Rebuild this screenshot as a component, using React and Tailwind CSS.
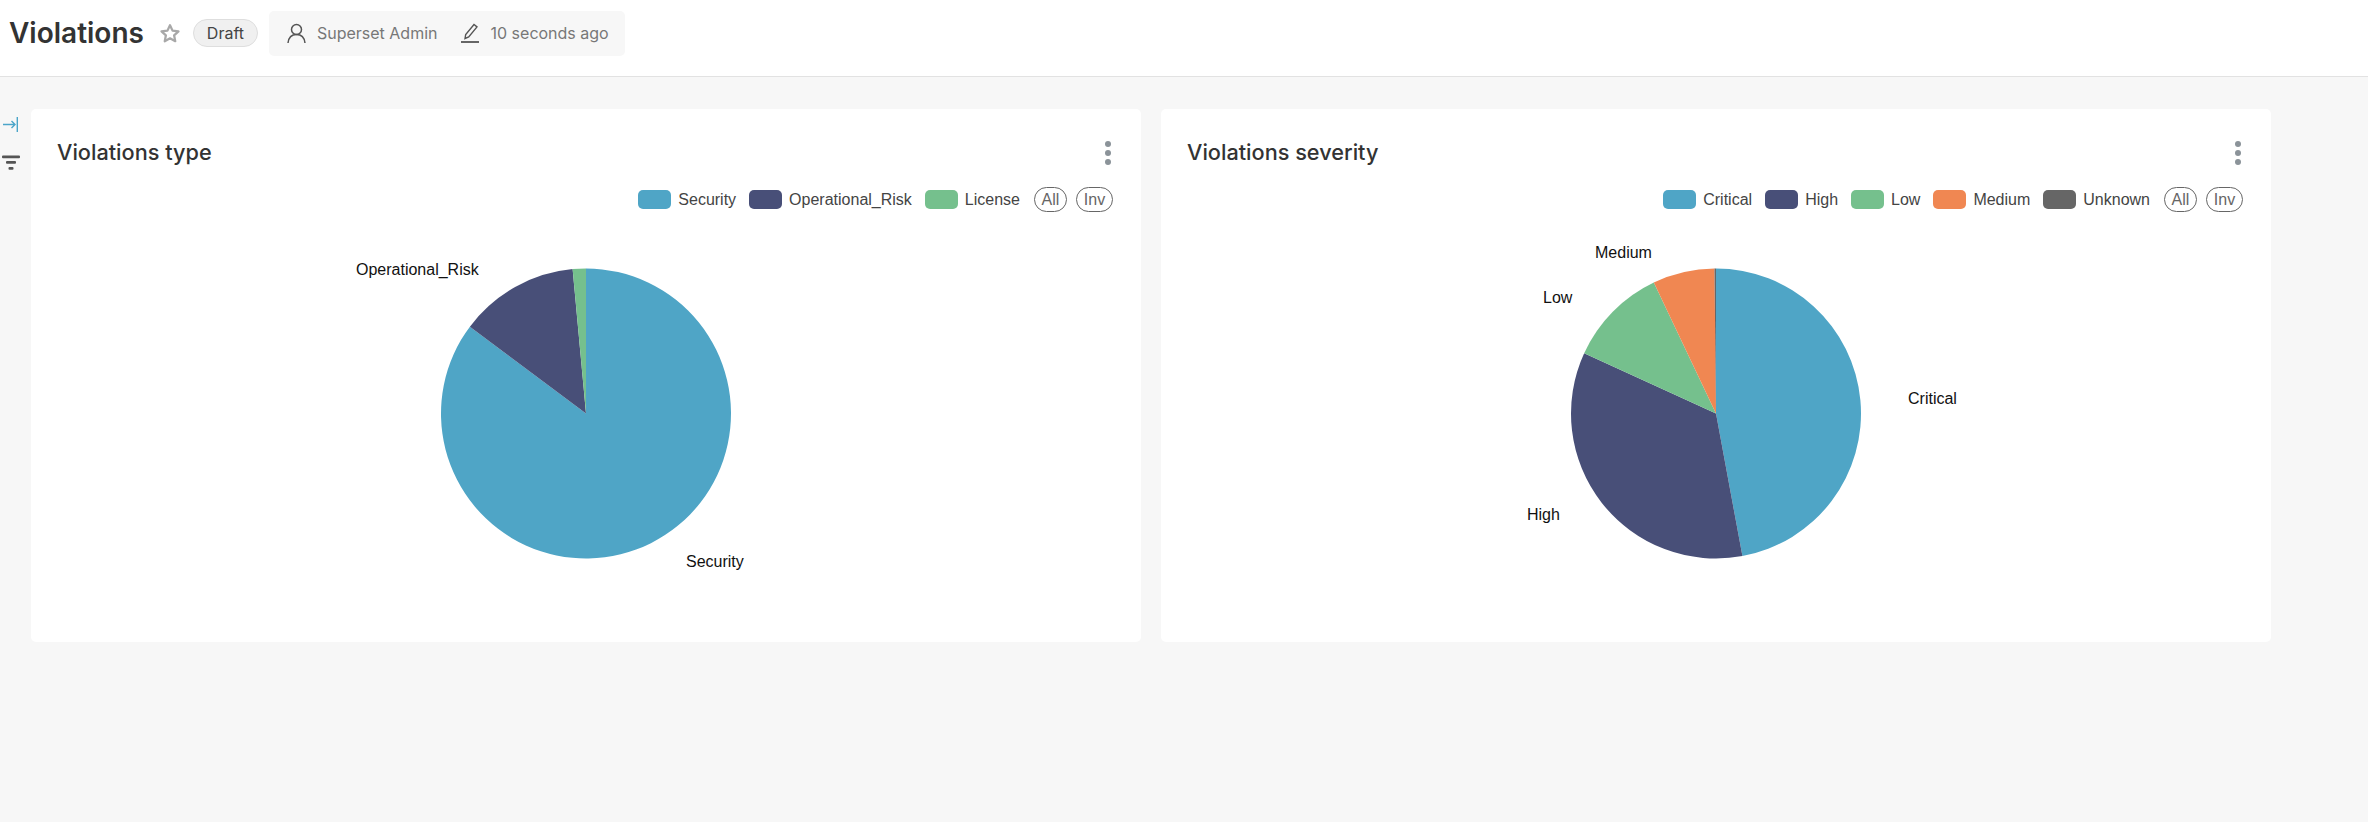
import React from "react";

const C = { blue: "#4FA5C6", navy: "#484F78", green: "#75C08D", orange: "#F08752", gray: "#666666" };

function slice(cx, cy, r, a0, a1) {
  const p = (a) => [cx + r * Math.sin((a * Math.PI) / 180), cy - r * Math.cos((a * Math.PI) / 180)];
  const [x0, y0] = p(a0);
  const [x1, y1] = p(a1);
  return `M${cx} ${cy}L${x0} ${y0}A${r} ${r} 0 ${a1 - a0 > 180 ? 1 : 0} 1 ${x1} ${y1}Z`;
}

function Dots() {
  return (
    <div className="flex flex-col gap-[3px] mr-[30px]">
      <span className="w-[6px] h-[6px] rounded-full bg-[#8b9399]" />
      <span className="w-[6px] h-[6px] rounded-full bg-[#8b9399]" />
      <span className="w-[6px] h-[6px] rounded-full bg-[#8b9399]" />
    </div>
  );
}

function Legend({ items }) {
  return (
    <div className="flex items-center justify-end gap-[13px] mt-[18px] pr-[28px] h-[25px] font-['Liberation_Sans',Arial,sans-serif] text-[16px] text-[#444]">
      {items.map((it) => (
        <div key={it.label} className="flex items-center gap-[7px]">
          <span style={{ background: it.color }} className="w-[33px] h-[19px] rounded-[5px] shrink-0" />
          <span className="whitespace-nowrap">{it.label}</span>
        </div>
      ))}
      <div className="flex items-center gap-[9px] ml-[1px]">
        <span className="w-[33px] h-[25px] rounded-full border border-[#666] flex items-center justify-center text-[#666]">All</span>
        <span className="w-[37px] h-[25px] rounded-full border border-[#666] flex items-center justify-center text-[#666]">Inv</span>
      </div>
    </div>
  );
}

function Card({ title, items, paths, labels }) {
  return (
    <div className="w-[1110px] h-[533px] bg-white rounded-[5px] shrink-0">
      <div className="flex items-center justify-between h-[33px] mt-[27px] pl-[26px]">
        <h2 className="text-[21.7px] leading-[33px] font-medium text-[#333]">{title}</h2>
        <Dots />
      </div>
      <Legend items={items} />
      <svg width="1110" height="300" viewBox="0 0 1110 300" className="block overflow-visible mt-[18px]">
        {paths.map((p) => (
          <path key={p.color} d={slice(555, 183.5, 145, p.a0, p.a1)} fill={p.color} />
        ))}
        {labels.map((l) => (
          <text key={l.t} x={l.x} y={l.y} fontSize="16" fill="#111" fontFamily="'Liberation Sans', Arial, sans-serif" dominantBaseline="central">
            {l.t}
          </text>
        ))}
      </svg>
    </div>
  );
}

export default function App() {
  return (
    <div className="min-h-[822px] bg-[#f7f7f7] font-['Inter',sans-serif]">
      <header className="h-[77px] bg-white border-b border-[#e2e2e2] flex items-center pl-[9px] pb-[10px]">
        <h1 className="text-[28px] leading-[36px] font-semibold text-[#333]">Violations</h1>
        <svg className="ml-[15px] shrink-0" width="22" height="21" viewBox="0 0 24 24" fill="none" stroke="#a8a8a8" strokeWidth="2.6" strokeLinejoin="round">
          <path d="M12 2.500l2.900 6.200 6.800.8-5 4.600 1.300 6.700L12 17.500l-6 3.300 1.300-6.700-5-4.600 6.800-.8z" />
        </svg>
        <span className="ml-[12px] w-[65px] h-[28px] rounded-full bg-[#f0f0f0] border border-[#dedede] flex items-center justify-center text-[16px] text-[#444] shrink-0">Draft</span>
        <div className="ml-[11px] w-[356px] h-[45px] rounded-[5px] bg-[#f7f7f7] flex items-center pl-[18px] text-[16px] text-[#777] shrink-0">
          <svg className="shrink-0" width="19" height="20" viewBox="0 0 19 20" fill="none" stroke="#555" strokeWidth="1.500">
            <circle cx="9.500" cy="6.500" r="5" />
            <path d="M1 20c.6-5.500 3-8.500 8.500-8.500s7.900 3 8.500 8.500" />
          </svg>
          <span className="ml-[11px] whitespace-nowrap">Superset Admin</span>
          <svg className="ml-[22px] shrink-0" width="20" height="20" viewBox="0 0 20 20" fill="none" stroke="#555" strokeWidth="1.400">
            <path d="M5 15.500l.7-4 8.300-10 3 2.400-8.300 10z" />
            <path d="M1 19h18" strokeWidth="1.800" />
          </svg>
          <span className="ml-[11px] whitespace-nowrap">10 seconds ago</span>
        </div>
      </header>
      <main className="flex">
        <aside className="w-[31px] shrink-0 pt-[40px] pl-[2px] flex flex-col gap-[23px]">
          <svg width="16" height="15" viewBox="0 0 16 15" fill="none" stroke="#4ba5c9" strokeWidth="1.400">
            <path d="M1 7.500h12M9.500 4l3.500 3.500-3.500 3.500" />
            <path d="M15.300 0v15" />
          </svg>
          <svg width="18" height="15" viewBox="0 0 18 15" fill="#555">
            <rect x="0" y="0.500" width="18" height="2.800" rx="1" />
            <rect x="4" y="6" width="10" height="2.800" rx="1" />
            <rect x="6.500" y="12" width="5" height="2.800" rx="1" />
          </svg>
        </aside>
        <div className="flex gap-[20px] pt-[32px]">
          <Card
            title="Violations type"
            items={[
              { label: "Security", color: C.blue },
              { label: "Operational_Risk", color: C.navy },
              { label: "License", color: C.green },
            ]}
            paths={[
              { color: C.blue, a0: 0, a1: 306.8 },
              { color: C.navy, a0: 306.8, a1: 354.7 },
              { color: C.green, a0: 354.7, a1: 360 },
            ]}
            labels={[
              { t: "Operational_Risk", x: 325, y: 39 },
              { t: "Security", x: 655, y: 331 },
            ]}
          />
          <Card
            title="Violations severity"
            items={[
              { label: "Critical", color: C.blue },
              { label: "High", color: C.navy },
              { label: "Low", color: C.green },
              { label: "Medium", color: C.orange },
              { label: "Unknown", color: C.gray },
            ]}
            paths={[
              { color: C.blue, a0: 0, a1: 169.5 },
              { color: C.navy, a0: 169.5, a1: 294.6 },
              { color: C.green, a0: 294.6, a1: 334.6 },
              { color: C.orange, a0: 334.6, a1: 359.4 },
              { color: C.gray, a0: 359.4, a1: 360 },
            ]}
            labels={[
              { t: "Medium", x: 434, y: 22 },
              { t: "Low", x: 382, y: 67 },
              { t: "High", x: 366, y: 284 },
              { t: "Critical", x: 747, y: 168 },
            ]}
          />
        </div>
      </main>
    </div>
  );
}
